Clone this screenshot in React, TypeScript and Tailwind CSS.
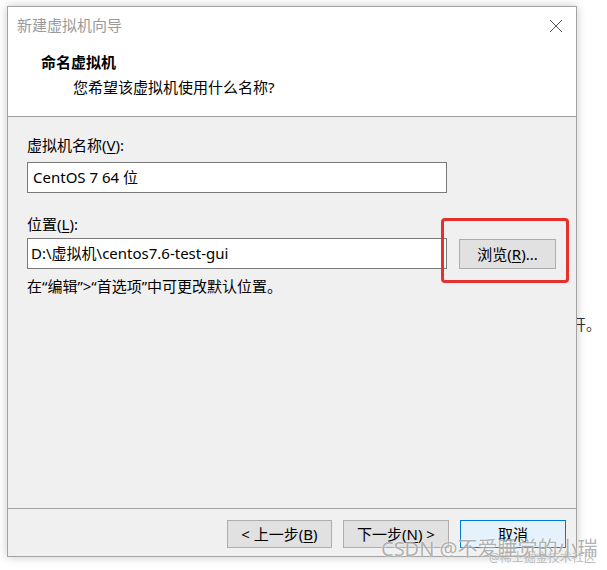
import React from "react";

const U = ({ c }: { c: string }) => <span className="underline underline-offset-2">{c}</span>;

export default function App() {
  return (
    <div className="relative w-[607px] h-[570px] bg-white overflow-hidden font-['Noto_Sans','Noto_Sans_CJK_SC',sans-serif] text-[15px] leading-[20px] text-black">
      {/* page text behind dialog */}
      <div className="absolute left-[556px] top-[314px] text-[15px] leading-[20px] text-[#333]">打开。</div>

      <div className="relative z-10 pt-[6px] pl-[7px]">
        <div className="w-[570px] h-[551px] border border-[#a3a3a3] bg-white flex flex-col shadow-[0_0_9px_rgba(0,0,0,0.22)]">
          {/* title bar */}
          <div className="h-[36px] flex items-center justify-between pl-[9px] pr-[13px]">
            <span className="text-[#9a9a9a] text-[15px]">新建虚拟机向导</span>
            <svg width="14" height="14" viewBox="0 0 14 14" className="mt-[1px]">
              <path d="M1 1 L13 13 M13 1 L1 13" stroke="#555" strokeWidth="1" fill="none" />
            </svg>
          </div>
          {/* header */}
          <div className="h-[73px] pt-[9px] pl-[33px] flex flex-col gap-[5px]">
            <div className="font-bold">命名虚拟机</div>
            <div className="pl-[32px]">您希望该虚拟机使用什么名称?</div>
          </div>
          <div className="h-px bg-[#a0a0a0]" />
          {/* body */}
          <div className="flex-1 bg-[#f0f0f0] pt-[18px] pl-[19px] flex flex-col">
            <div>虚拟机名称(<U c="V" />):</div>
            <div className="mt-[7px] w-[420px] h-[31px] bg-white border border-[#7a7a7a] flex items-center pl-[5px] pb-[2px]">
              CentOS 7 64 位
            </div>
            <div className="mt-[21px]">位置(<U c="L" />):</div>
            <div className="mt-[4px] flex items-start gap-[12px]">
              <div className="w-[420px] h-[31px] bg-white border border-[#7a7a7a] flex items-center pl-[3px] pb-[2px]">
                D:\虚拟机\centos7.6-test-gui
              </div>
              <div className="relative">
                <div className="w-[97px] h-[30px] mt-[1px] bg-[#e1e1e1] border border-[#adadad] flex items-center justify-center pb-[1px]">
                  浏览(<U c="R" />)...
                </div>
                <div className="absolute left-[-18px] top-[-20px] w-[128px] h-[65px] border-[3px] border-[#e5302b] rounded-[4px]" />
              </div>
            </div>
            <div className="mt-[7px]">在“编辑”&gt;“首选项”中可更改默认位置。</div>
          </div>
          <div className="h-px bg-[#a0a0a0]" />
          {/* footer */}
          <div className="h-[47px] bg-[#f0f0f0] flex items-start justify-end pr-[10px] pt-[11px] gap-[11px]">
            <div className="w-[105px] h-[28px] bg-[#e1e1e1] border border-[#adadad] flex items-center justify-center">
              &lt; 上一步(<U c="B" />)
            </div>
            <div className="w-[106px] h-[28px] bg-[#e1e1e1] border border-[#adadad] flex items-center justify-center">
              下一步(<U c="N" />) &gt;
            </div>
            <div className="w-[106px] h-[28px] bg-[#e5f1fb] border border-[#0078d7] flex items-center justify-center">
              取消
            </div>
          </div>
        </div>
      </div>

      {/* watermark */}
      <div className="absolute z-20 left-[489px] top-[550px] text-[12px] leading-[16px] text-[#b8b8b8]">@稀土掘金技术社区</div>
      <div className="absolute z-20 left-[381px] top-[536px] text-[20px] leading-[26px] text-[#9d9d9d]/80 [text-shadow:0_0_2px_#fff]">
        CSDN @不爱睡觉的小瑞
      </div>
    </div>
  );
}
